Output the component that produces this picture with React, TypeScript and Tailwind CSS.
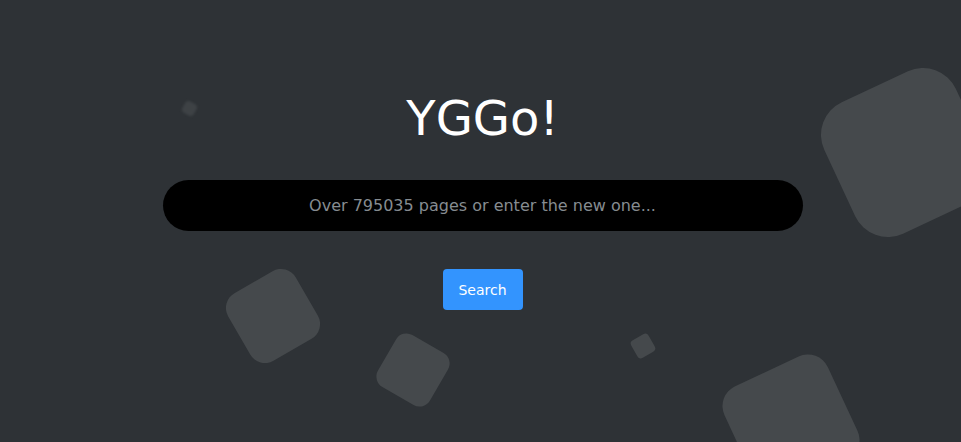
import React from "react";

type Shape = {
  left: number;
  top: number;
  size: number;
  rotate: number;
  radius: number;
  extra?: string;
};

const shapes: Shape[] = [
  { left: 183, top: 102, size: 13, rotate: 30, radius: 4, extra: "blur-[1px] opacity-70" },
  { left: 833, top: 80, size: 145, rotate: -25, radius: 36 },
  { left: 234, top: 277, size: 78, rotate: -30, radius: 17 },
  { left: 383, top: 340, size: 60, rotate: 30, radius: 12 },
  { left: 633, top: 336, size: 20, rotate: -30, radius: 4 },
  { left: 734, top: 366, size: 114, rotate: -25, radius: 22 },
];

const App: React.FunctionComponent = () => {
  return (
    <div
      className="relative w-[961px] h-[442px] overflow-hidden bg-[#2e3236]"
      style={{ fontFamily: '"DejaVu Sans", sans-serif' }}
    >
      {shapes.map((s, i) => (
        <div
          key={i}
          className={`absolute bg-[#45494c] ${s.extra ?? ""}`}
          style={{
            left: s.left,
            top: s.top,
            width: s.size,
            height: s.size,
            borderRadius: s.radius,
            transform: `rotate(${s.rotate}deg)`,
          }}
        ></div>
      ))}

      <div className="relative flex flex-col items-center pt-[91px] pl-[4px]">
        <h1 className="text-[48px] leading-[55px] text-white">YGGo!</h1>
        <input
          type="text"
          placeholder="Over 795035 pages or enter the new one..."
          className="mt-[34px] w-[640px] h-[51px] rounded-full bg-black text-center text-base text-white placeholder:text-[#868c91] outline-none"
        />
        <button className="mt-[38px] w-[80px] h-[41px] rounded-[4px] bg-[#3394fe] text-sm text-white">
          Search
        </button>
      </div>
    </div>
  );
};

export default App;
